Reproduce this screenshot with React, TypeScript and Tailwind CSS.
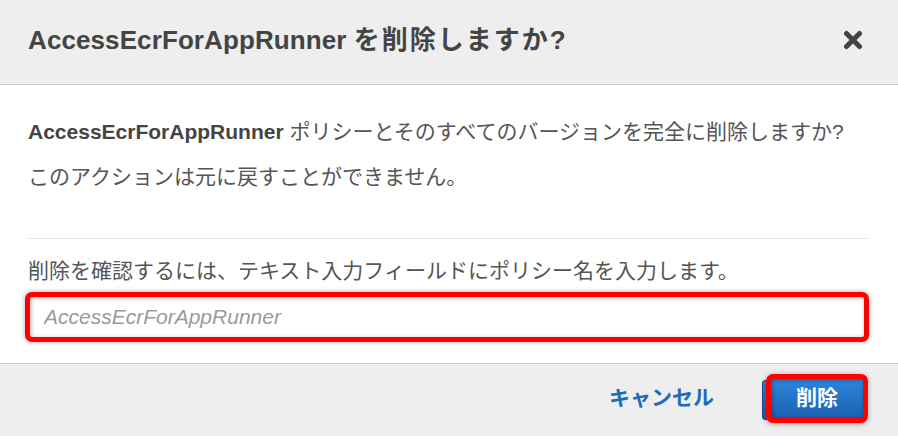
const jp = '"Liberation Sans", "Noto Sans CJK JP", sans-serif'

function CloseIcon() {
  return (
    <svg width="20" height="20" viewBox="0 0 20 20" fill="none">
      <path d="M3.5 3.5l13 13M16.5 3.5l-13 13" stroke="#444" strokeWidth="5" strokeLinecap="round" />
    </svg>
  )
}

export default function App() {
  return (
    <div className="w-[898px] h-[436px] bg-white flex flex-col overflow-hidden" style={{ fontFamily: jp }}>
      {/* Header */}
      <div className="h-[85px] shrink-0 bg-[#eeeeee] border-b border-[#cccccc] flex items-center justify-between pl-[28px] pr-[35px] pb-[4px]">
        <h1 className="text-[26px] font-bold text-[#444444] tracking-[0.1px]">
          AccessEcrForAppRunner <span className="tracking-[2px]">を削除しますか?</span>
        </h1>
        <button className="flex items-center justify-center">
          <CloseIcon />
        </button>
      </div>

      {/* Body */}
      <div className="flex-1 pl-[28px] pr-[30px] pt-[24px]">
        <p className="text-[21px] leading-[45px] text-[#555555]">
          <span className="font-bold text-[#444444]">AccessEcrForAppRunner</span> ポリシーとそのすべてのバージョンを完全に削除しますか?
        </p>
        <p className="text-[21px] leading-[45px] text-[#555555]">このアクションは元に戻すことができません。</p>

        <div className="mt-[39px] h-px bg-[#e6e6e6]" />

        <p className="mt-[17px] text-[21px] leading-[30px] text-[#555555]">
          削除を確認するには、テキスト入力フィールドにポリシー名を入力します。
        </p>

        <div className="mt-[6px] -ml-[3px] -mr-[1px]">
          <input
            readOnly
            placeholder="AccessEcrForAppRunner"
            className="w-full h-[50px] rounded-[7px] border-[5px] border-[#ff0000] bg-white pl-[14px] text-[21px] italic placeholder:text-[#9a9a9a] outline-none shadow-[0_0_5px_rgba(0,0,0,0.35),inset_1px_1px_4px_rgba(0,0,0,0.3)]"
            style={{ fontFamily: '"Liberation Sans", Arial, sans-serif' }}
          />
        </div>
      </div>

      {/* Footer */}
      <div className="h-[73px] shrink-0 bg-[#eeeeee] border-t border-[#cccccc] flex items-center justify-end pr-[30px] pb-[4px]">
        <button className="text-[21px] font-bold text-[#1d6bbd]">キャンセル</button>
        <div className="relative ml-[48px] h-[49px] w-[106px]">
          <div className="absolute left-0 top-[6px] h-[40px] w-[98px] rounded-[3px] border border-[#174a85] bg-gradient-to-b from-[#2b86de] to-[#1b5fae]" />
          <button className="absolute left-[4px] top-0 h-[49px] w-[102px] rounded-[7px] border-[5px] border-[#ff0000] bg-gradient-to-b from-[#2d86dc] to-[#1c61b2] text-[21px] font-bold text-white shadow-[0_1px_5px_rgba(0,0,0,0.35),inset_1px_1px_4px_rgba(0,0,0,0.35)]">
            削除
          </button>
        </div>
      </div>
    </div>
  )
}
